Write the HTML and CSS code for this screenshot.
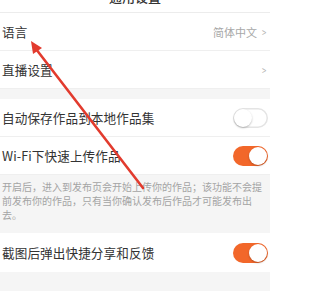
FILE: index.html
```html
<!DOCTYPE html>
<html lang="zh">
<head>
<meta charset="utf-8">
<link rel="stylesheet" href="styles.css">
</head>
<body>
<div class="page">
  <div class="header">
    <span class="back">&lt;</span>
    <span class="title">通用设置</span>
  </div>
  <div class="row">
    <span class="label">语言</span>
    <span class="value">简体中文<span class="chev">&gt;</span></span>
  </div>
  <div class="row">
    <span class="label">直播设置</span>
    <span class="value"><span class="chev">&gt;</span></span>
  </div>
  <div class="band small"></div>
  <div class="row">
    <span class="label">自动保存作品到本地作品集</span>
    <span class="toggle"><span class="knob"></span></span>
  </div>
  <div class="row">
    <span class="label">Wi-Fi下快速上传作品</span>
    <span class="toggle on"><span class="knob"></span></span>
  </div>
  <div class="band desc">开启后，进入到发布页会开始上传你的作品；该功能不会提前发布你的作品，只有当你确认发布后作品才可能发布出去。</div>
  <div class="row last">
    <span class="label">截图后弹出快捷分享和反馈</span>
    <span class="toggle on"><span class="knob"></span></span>
  </div>
  <div class="band rest"></div>
  <svg class="arrow" width="270" height="291" viewBox="0 0 270 291">
    <line x1="143" y1="188" x2="36" y2="49" stroke="#e23b2e" stroke-width="2.6" stroke-linecap="round"/>
    <polygon points="31,41 42,48 33,54" fill="#e23b2e"/>
  </svg>
</div>
</body>
</html>
```
FILE: styles.css
```css
html, body {
  margin: 0;
  padding: 0;
  background: #ffffff;
}
.page {
  position: relative;
  width: 270px;
  height: 291px;
  overflow: hidden;
  font-family: "Noto Sans CJK SC", "Noto Sans", sans-serif;
  color: #333333;
}
.header {
  height: 12px;
  overflow: hidden;
  position: relative;
  border-bottom: 1px solid #ececec;
}
.title {
  display: block;
  text-align: center;
  font-size: 13px;
  line-height: 13px;
  margin-top: -10px;
  color: #333;
  font-weight: 500;
}
.back {
  position: absolute;
  left: 4px;
  top: -10px;
  font-size: 13px;
  line-height: 13px;
  color: #555;
}
.row {
  height: 37px;
  display: flex;
  align-items: center;
  justify-content: space-between;
  padding-left: 2px;
  border-bottom: 1px solid #efefef;
}
.row.last {
  border-bottom: none;
  height: 39px;
}
.label {
  font-size: 12.6px;
  color: #333333;
  letter-spacing: 0.1px;
}
.value {
  font-size: 11px;
  color: #a8a8a8;
  display: flex;
  align-items: center;
  padding-right: 3px;
}
.chev {
  margin-left: 4px;
  font-size: 11px;
  color: #b5b5b5;
  transform: scaleX(0.7);
}
.band {
  background: #f5f5f5;
}
.band.small {
  height: 10px;
}
.band.desc {
  height: 49px;
  padding: 5px 6px 4px 2px;
  font-size: 10px;
  line-height: 14px;
  color: #a4a4a4;
}
.band.rest {
  height: 20px;
}
.toggle {
  width: 35px;
  height: 20px;
  margin-right: 2px;
  border-radius: 10px;
  background: #ffffff;
  box-shadow: inset 0 0 0 1.5px #e4e4e4;
  display: flex;
  align-items: center;
  justify-content: flex-start;
  box-sizing: border-box;
  padding: 1px;
}
.toggle.on {
  background: #f2672a;
  box-shadow: none;
  justify-content: flex-end;
}
.knob {
  width: 18px;
  height: 18px;
  border-radius: 50%;
  background: #ffffff;
  box-shadow: 0 1px 2px rgba(0, 0, 0, 0.25);
}
.arrow {
  position: absolute;
  left: 0;
  top: 0;
  pointer-events: none;
}
```
